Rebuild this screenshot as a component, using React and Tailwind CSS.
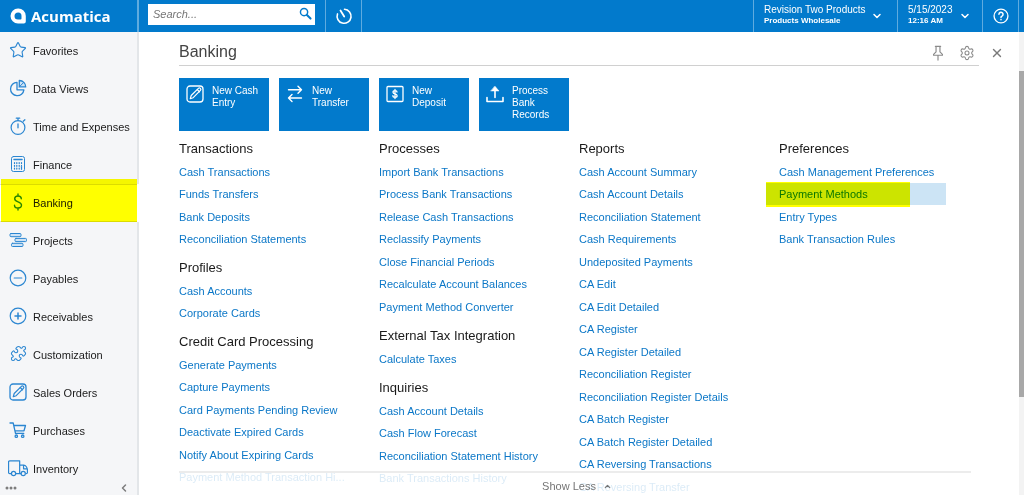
import React from 'react';
import { ChevronDown, ChevronLeft, ChevronUp, X, Puzzle, Settings, Star } from 'lucide-react';

const Icon = ({ size = 18, strokeWidth = 1, className = '', children }) => (
  <svg
    width={size}
    height={size}
    viewBox="0 0 18 18"
    fill="none"
    stroke="currentColor"
    strokeWidth={strokeWidth}
    strokeLinecap="round"
    strokeLinejoin="round"
    className={className}
    aria-hidden="true"
  >
    {children}
  </svg>
);

const StarIcon = () => <Star size={18} strokeWidth={1.5} />;

const PuzzleIcon = () => <Puzzle size={17} strokeWidth={1.5} />;

const PieIcon = () => (
  <Icon strokeWidth={1.3}>
    <path d="M8 3.300a6.700 6.700 0 1 0 6.900 7.500H8z" />
    <path d="M10.300 1.500v6.400h6.400a6.300 6.300 0 0 0-6.400-6.400z" fill="#cfe3f5" />
    <path d="M10.300 7.900l4.400-4.500" strokeWidth="1" />
  </Icon>
);

const TimerIcon = () => (
  <Icon strokeWidth={1.3}>
    <circle cx="9" cy="10.500" r="6.900" strokeWidth="1.200" />
    <path d="M9 7v3.800M7.300 1.200h3.400M9 1.200v2.400M14.200 4.200l1.700-1.400" />
  </Icon>
);

const CalculatorIcon = () => (
  <Icon>
    <rect x="2.500" y="1.500" width="13" height="15" rx="2" />
    <path d="M5 4.500h8" strokeWidth="1.500" />
    <path d="M5.500 7.500v6.800M7.800 7.500v6.800M10.200 7.500v6.800M12.500 7.500v3" strokeWidth="1.200" strokeDasharray="1 1.800" />
    <path d="M12.500 11.500v2.800" strokeWidth="1.200" />
  </Icon>
);

const DollarIcon = () => (
  <Icon strokeWidth={1.4}>
    <path d="M9 1v2M9 15v2M12.300 5.800C12.300 4 11 3 9 3S5.700 4 5.700 5.800c0 3.900 6.800 2.300 6.800 6.300 0 1.800-1.500 2.900-3.500 2.900s-3.500-1-3.500-2.800" />
  </Icon>
);

const ProjectsIcon = () => (
  <Icon>
    <g fill="#cfe3f5">
      <rect x="1" y="2.500" width="11" height="3.200" rx="1" />
      <rect x="6" y="7.400" width="11.500" height="3.200" rx="1" />
      <rect x="2.500" y="12.300" width="11.500" height="3.200" rx="1" />
    </g>
  </Icon>
);

const MinusIcon = () => (
  <Icon strokeWidth={1.2}>
    <circle cx="9" cy="9" r="7.800" />
    <path d="M5.200 9h7.600" />
  </Icon>
);

const PlusIcon = () => (
  <Icon strokeWidth={1.2}>
    <circle cx="9" cy="9" r="7.800" />
    <path d="M6 9h6M9 6v6" strokeWidth="1.500" />
  </Icon>
);

const EditIcon = () => (
  <Icon strokeWidth={1.3}>
    <rect x="1" y="1" width="16" height="16" rx="3" />
    <path d="M4.300 13.700l.9-3.200 7.200-7.100a1.300 1.300 0 0 1 2 2l-7.200 7.300z" strokeWidth="1.200" />
    <path d="M11.300 4.600l2.200 2.100" />
  </Icon>
);

const CartIcon = () => (
  <Icon strokeWidth={1.3}>
    <path d="M1 2h3.200l2.300 10.300h8.300M4.900 4.500h11.600l-1.500 5.300H6" />
    <circle cx="7.300" cy="15.200" r="1.200" />
    <circle cx="13.700" cy="15.200" r="1.200" />
  </Icon>
);

const TruckIcon = () => (
  <Icon size={20} strokeWidth={1.1}>
    <path d="M3 14H1.500a1 1 0 0 1-1-1V3.500a1 1 0 0 1 1-1h9v11.500H7M10.500 6.500h3.700c1.800 0 3.300 2.200 3.300 4.500v2a1 1 0 0 1-1 1M10.500 14h1.200M14 6.500v3.200h3" />
    <circle cx="5" cy="14" r="1.900" />
    <circle cx="13.700" cy="14" r="1.900" />
  </Icon>
);

const TransferIcon = () => (
  <Icon strokeWidth={1.4}>
    <path d="M2.500 4.800h13M12 1.300l3.500 3.500L12 8.300M15.500 13h-13M6 9.500L2.500 13 6 16.500" />
  </Icon>
);

const DepositIcon = () => (
  <Icon strokeWidth={1.3}>
    <rect x="1" y="1.500" width="16" height="15" rx="1" />
    <path d="M9 4.500v9M11 7c0-.9-.8-1.400-2-1.400S7 6.200 7 7.200c0 2.200 4.100 1.300 4.100 3.500 0 1-.8 1.600-2.100 1.600s-2.100-.6-2.100-1.600" />
  </Icon>
);

const UploadIcon = () => (
  <Icon strokeWidth={1.5}>
    <path d="M1 12.500v4h16v-4M9 12.500V5" strokeWidth="1.600" />
    <path d="M9 1.300l4 4.700H5z" fill="currentColor" strokeWidth=".5" />
  </Icon>
);

const HistoryIcon = () => (
  <Icon strokeWidth={1.6}>
    <path d="M9.500 2.300a7 7 0 1 1-7 4.600" />
    <path d="M9.200 9.500L5.500 3.500" strokeWidth="1.800" />
  </Icon>
);

const SearchIcon = () => (
  <Icon size={13} strokeWidth={2}>
    <circle cx="7" cy="7" r="5" />
    <path d="M11 11l5 5" strokeWidth="2.800" />
  </Icon>
);

const PinIcon = () => (
  <Icon size={16} strokeWidth={1.3}>
    <path d="M6 1.500h6M6.800 1.500v6.300L4 10.500v1h10v-1l-2.800-2.700V1.500M9 11.500v5.500" />
  </Icon>
);

const HelpIcon = () => (
  <Icon size={16} strokeWidth={1.5}>
    <circle cx="9" cy="9" r="7.800" />
    <path d="M6.700 7a2.300 2.300 0 1 1 3.400 2.100c-.8.400-1.100.8-1.100 1.600M9 13v.2" strokeWidth="1.700" />
  </Icon>
);

const NAV_ITEMS = [
  { label: 'Favorites', icon: StarIcon },
  { label: 'Data Views', icon: PieIcon },
  { label: 'Time and Expenses', icon: TimerIcon },
  { label: 'Finance', icon: CalculatorIcon },
  { label: 'Banking', icon: DollarIcon, active: true },
  { label: 'Projects', icon: ProjectsIcon },
  { label: 'Payables', icon: MinusIcon },
  { label: 'Receivables', icon: PlusIcon },
  { label: 'Customization', icon: PuzzleIcon },
  { label: 'Sales Orders', icon: EditIcon },
  { label: 'Purchases', icon: CartIcon },
  { label: 'Inventory', icon: TruckIcon },
];

const TILES = [
  { label: 'New Cash Entry', icon: EditIcon },
  { label: 'New Transfer', icon: TransferIcon },
  { label: 'New Deposit', icon: DepositIcon },
  { label: 'Process Bank Records', icon: UploadIcon },
];

const COLUMNS = [
  [
    {
      title: 'Transactions',
      links: ['Cash Transactions', 'Funds Transfers', 'Bank Deposits', 'Reconciliation Statements'],
    },
    { title: 'Profiles', links: ['Cash Accounts', 'Corporate Cards'] },
    {
      title: 'Credit Card Processing',
      links: [
        'Generate Payments',
        'Capture Payments',
        'Card Payments Pending Review',
        'Deactivate Expired Cards',
        'Notify About Expiring Cards',
        'Payment Method Transaction Hi...',
        'Payment Processing Log',
      ],
    },
  ],
  [
    {
      title: 'Processes',
      links: [
        'Import Bank Transactions',
        'Process Bank Transactions',
        'Release Cash Transactions',
        'Reclassify Payments',
        'Close Financial Periods',
        'Recalculate Account Balances',
        'Payment Method Converter',
      ],
    },
    { title: 'External Tax Integration', links: ['Calculate Taxes'] },
    {
      title: 'Inquiries',
      links: [
        'Cash Account Details',
        'Cash Flow Forecast',
        'Reconciliation Statement History',
        'Bank Transactions History',
        'Anticipated Cash Transactions',
      ],
    },
  ],
  [
    {
      title: 'Reports',
      links: [
        'Cash Account Summary',
        'Cash Account Details',
        'Reconciliation Statement',
        'Cash Requirements',
        'Undeposited Payments',
        'CA Edit',
        'CA Edit Detailed',
        'CA Register',
        'CA Register Detailed',
        'Reconciliation Register',
        'Reconciliation Register Details',
        'CA Batch Register',
        'CA Batch Register Detailed',
        'CA Reversing Transactions',
        'CA Reversing Transfer',
      ],
    },
  ],
  [
    {
      title: 'Preferences',
      links: ['Cash Management Preferences', 'Payment Methods', 'Entry Types', 'Bank Transaction Rules'],
    },
  ],
];

const SELECTED_LINK = 'Payment Methods';

function TopBar() {
  return (
    <header className="flex h-8 shrink-0 bg-[#027acc] text-white">
      <a href="#home" className="flex w-[139px] shrink-0 items-center gap-1 border-r-2 border-[#5fabdf] pl-[10px]">
        <svg width="17" height="16" viewBox="0 0 17 16" fill="currentColor" aria-hidden="true">
          <path
            fillRule="evenodd"
            d="M8 .5a7.500 7.500 0 0 1 7.800 7.500v5.500a2 2 0 0 1-2 2H8A7.500 7.500 0 0 1 8 .5zM8.200 4.500a3.700 3.700 0 0 0-3.700 3.600 3.500 3.500 0 0 0 3.500 3.500h2.500a1 1 0 0 0 1-1V8a3.400 3.400 0 0 0-3.300-3.500z"
          />
        </svg>
        <span className="font-['Open_Sans',sans-serif] text-[15px] leading-8 font-bold">Acumatica</span>
      </a>

      <form role="search" className="flex w-[187px] shrink-0 items-start border-r border-[#5fabdf] pt-1 pl-[9px]">
        <div className="flex h-[21px] w-[167px] items-center bg-white pr-[3px] text-[#027acc]">
          <input
            type="text"
            aria-label="Search"
            placeholder="Search..."
            className="w-full min-w-0 flex-1 px-[5px] text-[11px] text-gray-800 italic outline-none placeholder:text-[#757575]"
          />
          <button type="button" aria-label="Run search" className="pb-[3px]">
            <SearchIcon />
          </button>
        </div>
      </form>

      <button type="button" aria-label="Recent" className="flex w-9 items-center justify-center border-r border-[#5fabdf]">
        <HistoryIcon />
      </button>

      <div className="flex-1" />

      <button type="button" className="flex w-[144px] items-start border-l border-[#5fabdf] pl-[10px] text-left">
        <span className="flex w-[104px] flex-col pt-1 whitespace-nowrap">
          <span className="text-[10px] leading-3">Revision Two Products</span>
          <span className="text-[8px] leading-[10px] font-bold">Products Wholesale</span>
        </span>
        <ChevronDown size={12} strokeWidth={3} className="mt-[10px] ml-[3px]" />
      </button>
      <button type="button" className="flex w-[85px] items-start border-l border-[#5fabdf] pl-[10px] text-left">
        <span className="flex w-12 flex-col pt-1 whitespace-nowrap">
          <span className="text-[10px] leading-3">5/15/2023</span>
          <span className="text-[8px] leading-[10px] font-bold">12:16 AM</span>
        </span>
        <ChevronDown size={12} strokeWidth={3} className="mt-[10px] ml-[3px]" />
      </button>
      <button type="button" aria-label="Help" className="mr-[5px] flex w-[37px] items-center justify-center border-x border-[#5fabdf]">
        <HelpIcon />
      </button>
    </header>
  );
}

function Sidebar() {
  return (
    <nav className="relative flex w-[139px] shrink-0 flex-col overflow-hidden bg-[#f5f6f8]">
      {NAV_ITEMS.map((item) => {
        const NavIcon = item.icon;
        return (
          <a
            key={item.label}
            href="#menu"
            className={`relative flex h-[38px] shrink-0 items-center border-r-2 text-[11px] text-[#1a1a1a] ${
              item.active ? 'border-r-white bg-white' : 'border-r-[#e3e6e9]'
            }`}
          >
            <span className="ml-2 flex w-5 shrink-0 justify-center pb-[3px] text-[#2b86d1]">
              <NavIcon />
            </span>
            <span className="ml-[5px] whitespace-nowrap">{item.label}</span>
            {item.active && (
              <>
                <span className="absolute inset-x-0 top-0 bottom-0 border-y border-[#dcdcdc]" />
                <span className="absolute -top-[5px] right-0 bottom-0 left-px z-10 bg-[#ffff00] mix-blend-multiply" />
              </>
            )}
          </a>
        );
      })}
      <div className="flex-1 border-r-2 border-[#e3e6e9]" />

      <div className="absolute inset-x-0 bottom-0 flex h-[14px] items-center justify-between pr-[9px] pl-[5px] text-[#7d7d7d]">
        <button type="button" aria-label="More items">
          <svg width="12" height="4" viewBox="0 0 12 4" fill="currentColor" aria-hidden="true">
            <circle cx="2" cy="2" r="1.500" />
            <circle cx="6" cy="2" r="1.500" />
            <circle cx="10" cy="2" r="1.500" />
          </svg>
        </button>
        <button type="button" aria-label="Collapse menu">
          <ChevronLeft size={12} strokeWidth={3} />
        </button>
      </div>
    </nav>
  );
}

function MenuLink({ label }) {
  if (label === SELECTED_LINK) {
    return (
      <li className="relative -ml-[13px] flex h-[22px] w-[180px] items-center bg-[#cce4f5] pl-[13px]">
        <a href="#screen">{label}</a>
        <span className="absolute -top-px -bottom-[2px] left-0 w-36 bg-[#ffff00] mix-blend-multiply" />
      </li>
    );
  }
  return (
    <li className="flex h-[22px] items-center odd:h-[23px]">
      <a href="#screen">{label}</a>
    </li>
  );
}

function Workspace() {
  return (
    <main className="relative min-w-0 flex-1 overflow-hidden bg-white pl-10">
      <div className="flex h-[34px]">
        <div className="flex flex-1 items-center justify-between border-b border-[#d0d0d0] pt-[6px] text-[#8a8a8a]">
          <h1 className="text-[16px] leading-5 text-[#444]">Banking</h1>
          <div className="flex items-center gap-[13px] pt-[3px] pr-1">
            <button type="button" aria-label="Pin">
              <PinIcon />
            </button>
            <button type="button" aria-label="Settings">
              <Settings size={16} strokeWidth={1.6} />
            </button>
          </div>
        </div>
        <button type="button" aria-label="Close" className="mr-1 flex w-9 items-center justify-center pt-2 text-[#7a7a7a]">
          <X size={14} strokeWidth={2.3} />
        </button>
      </div>

      <div className="mt-3 flex gap-[10px]">
        {TILES.map((tile) => {
          const TileIcon = tile.icon;
          return (
            <button
              key={tile.label}
              type="button"
              className="flex h-[53px] w-[90px] items-start gap-2 bg-[#027acc] pt-[7px] pl-[7px] text-left text-[10px] leading-3 text-white"
            >
              <span className="shrink-0">
                <TileIcon />
              </span>
              <span className="w-12">{tile.label}</span>
            </button>
          );
        })}
      </div>

      <div className="mt-[7px] mr-10 grid grid-cols-4">
        {COLUMNS.map((sections, i) => (
          <div key={i} className="flex flex-col gap-[7px]">
            {sections.map((section) => (
              <section key={section.title}>
                <h2 className="text-[13px] leading-[22px] text-[#1a1a1a]">{section.title}</h2>
                <ul className="text-[11px] leading-4 whitespace-nowrap text-[#0b77c7]">
                  {section.links.map((label) => (
                    <MenuLink key={label} label={label} />
                  ))}
                </ul>
              </section>
            ))}
          </div>
        ))}
      </div>

      {/* Fades the rows below the fold */}
      <div className="absolute right-0 bottom-0 left-0 h-6 bg-white/85 pr-12 pl-10">
        <button
          type="button"
          className="flex h-full w-full items-center justify-center gap-[7px] border-t-2 border-[#ececec] pt-1 pl-1 text-[11px] text-[#757575]"
        >
          Show Less
          <ChevronUp size={9} strokeWidth={3} />
        </button>
      </div>
    </main>
  );
}

export default function App() {
  return (
    <div className="flex h-screen flex-col overflow-hidden font-['Liberation_Sans',Arial,sans-serif]">
      <TopBar />
      <div className="flex min-h-0 flex-1">
        <Sidebar />
        <Workspace />
        <div className="flex w-[5px] shrink-0 flex-col bg-[#f3f3f3] pt-[39px]">
          <div className="h-[77%] bg-[#a8a8a8]" />
        </div>
      </div>
    </div>
  );
}
